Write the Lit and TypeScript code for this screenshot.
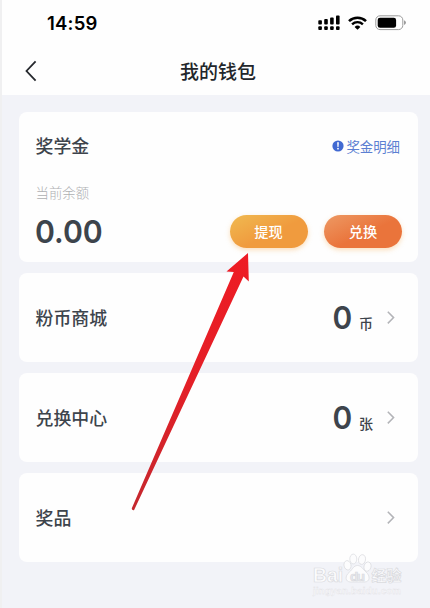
import { LitElement, html, css, svg, nothing } from "lit";
import { customElement, property } from "lit/decorators.js";

const chevron = html`<svg width="10" height="14" viewBox="0 0 10 14" fill="none" stroke="#b3b4b8" stroke-width="1.5">
  <path d="M1.8 0.8 7.6 6.6 1.8 12.4" />
</svg>`;

@customElement("status-bar")
export class StatusBar extends LitElement {
  static styles = css`
    :host {
      display: flex;
      align-items: center;
      box-sizing: border-box;
      height: 46px;
      padding: 0 24px 0 45px;
      color: #000;
    }
    .time {
      flex: 1;
      font: 600 18.5px/22px Inter, sans-serif;
      letter-spacing: 0.2px;
    }
    svg { display: block; }
    .wifi { margin: 0 8px; }
  `;
  render() {
    return html`
      <span class="time">14:59</span>
      <svg width="22" height="16" viewBox="0 0 22 16">
        ${[0, 1, 2, 3].map((i) => svg`
          <rect x=${0.3 + i * 5.9} y=${[5.2, 4, 2.5, 0.5][i]} width="3.6" height=${[4.2, 5.4, 6.9, 8.9][i]} rx="0.9" />
          <rect x=${0.3 + i * 5.9} y="11.3" width="3.6" height="3.6" rx="0.9" />
        `)}
      </svg>
      <svg class="wifi" width="19" height="14" viewBox="0 0 19 14" fill="none" stroke="#000">
        <path d="M1 5.1A12.3 12.3 0 0 1 18 5.1" stroke-width="2.6" />
        <path d="M4.1 8.3A7.9 7.9 0 0 1 14.9 8.3" stroke-width="2.4" />
        <path d="M6.6 10.9a4.3 4.3 0 0 1 5.8 0L9.5 13.8Z" fill="#000" stroke="none" />
      </svg>
      <svg width="31" height="16" viewBox="0 0 31 16">
        <rect x="0.8" y="0.8" width="27" height="13.8" rx="4.2" fill="none" stroke="#9b9b9b" />
        <rect x="2.7" y="2.7" width="18.4" height="10" rx="2.3" />
        <path d="M29 5.3q2.1.9 2 2.4t-2 2.4Z" fill="#9b9b9b" />
      </svg>
    `;
  }
}

@customElement("wallet-row")
export class WalletRow extends LitElement {
  @property() label = "";
  @property() amount = "";
  @property() unit = "";

  static styles = css`
    :host {
      display: flex;
      align-items: center;
      box-sizing: border-box;
      height: 89px;
      padding: 0 22px 0 16.5px;
      border-radius: 8px;
      background: #fefefe;
      color: #3d444c;
    }
    .label { flex: 1; padding-bottom: 2px; font-size: 17.9px; line-height: 28px; font-weight: 500; }
    .value { display: flex; align-items: baseline; margin-right: 13px; }
    .amount { font: 600 31.5px/40px Inter, sans-serif; transform: scaleX(0.95); }
    .unit { margin-left: 6.5px; font-size: 14px; line-height: 20px; font-weight: 500; }
  `;
  render() {
    return html`
      <span class="label">${this.label}</span>
      ${this.amount
        ? html`<span class="value"><span class="amount">${this.amount}</span><span class="unit">${this.unit}</span></span>`
        : nothing}
      ${chevron}
    `;
  }
}

@customElement("app-root")
export class AppRoot extends LitElement {
  static styles = css`
    :host {
      display: block;
      position: relative;
      box-sizing: border-box;
      width: 430px;
      height: 608px;
      overflow: hidden;
      border-left: 2px solid #f0f0f1;
      background: #f2f3f8;
      color: #3d444c;
      font-family: "Noto Sans CJK SC", sans-serif;
    }
    .top { height: 95px; background: #fefefe; }
    .nav {
      display: grid;
      grid-template-columns: 36px 1fr 36px;
      align-items: center;
      height: 49px;
      padding-left: 4px;
    }
    .back { justify-self: end; margin-right: 5px; }
    .title {
      text-align: center;
      color: #22262b;
      font-size: 19px;
      line-height: 28px;
      font-weight: 500;
    }
    .cards {
      display: flex;
      flex-direction: column;
      gap: 11px;
      padding: 17px 10px 0 17px;
    }
    .balance {
      box-sizing: border-box;
      width: 399px;
      height: 150px;
      padding: 19px 16px 0 16.5px;
      border-radius: 8px;
      background: #fefefe;
    }
    wallet-row { width: 399px; }
    .line { display: flex; align-items: center; justify-content: space-between; }
    .name { font-size: 17.9px; line-height: 28px; font-weight: 500; }
    .detail {
      display: flex;
      align-items: center;
      gap: 2px;
      margin-right: 2px;
      padding-top: 1px;
      color: #5c7fd2;
      font-size: 13.4px;
      line-height: 20px;
    }
    .caption { margin-top: 24px; color: #aeafb2; font-size: 13.4px; line-height: 19px; font-weight: 300; }
    .money { height: 58px; }
    .sum {
      padding-top: 2px;
      margin-left: -0.5px;
      font: 600 31.5px/40px Inter, sans-serif;
      transform: scaleX(0.96);
      transform-origin: left;
    }
    .actions { display: flex; gap: 16.5px; }
    .btn {
      width: 78px;
      height: 33px;
      border-radius: 17px;
      color: #fff;
      text-align: center;
      font-size: 14.2px;
      line-height: 32px;
      font-weight: 500;
      box-shadow: 0 2px 5px rgba(244, 162, 65, 0.35);
    }
    .withdraw { background: linear-gradient(155deg, #f0b74f 5%, #f09b3e 55%); }
    .redeem { background: linear-gradient(155deg, #ed9660 5%, #ea743b 55%); }
    .arrow { position: absolute; left: 128px; top: 250px; }
    .mark {
      position: absolute;
      left: 307px;
      top: 552px;
    }
    .mark text { font-family: "Liberation Sans", "Noto Sans CJK SC", sans-serif; font-weight: 700; }
  `;
  render() {
    return html`
      <div class="top">
        <status-bar></status-bar>
        <div class="nav">
          <svg class="back" width="13" height="22" viewBox="0 0 13 22" fill="none" stroke="#25282d" stroke-width="1.8">
            <path d="M11.6 1.4 2.5 11l9.1 9.6" />
          </svg>
          <span class="title">我的钱包</span>
        </div>
      </div>
      <div class="cards">
        <section class="balance">
          <div class="line">
            <span class="name">奖学金</span>
            <span class="detail">
              <svg width="12" height="12" viewBox="0 0 12 12">
                <circle cx="6" cy="6" r="5.6" fill="#4169d2" />
                <path d="M5.1 2.3h1.8L6.5 7h-1Z" fill="#fff" />
                <circle cx="6" cy="8.7" r="0.9" fill="#fff" />
              </svg>
              奖金明细
            </span>
          </div>
          <div class="caption">当前余额</div>
          <div class="line money">
            <span class="sum">0.00</span>
            <div class="actions">
              <div class="btn withdraw">提现</div>
              <div class="btn redeem">兑换</div>
            </div>
          </div>
        </section>
        <wallet-row label="粉币商城" amount="0" unit="币"></wallet-row>
        <wallet-row label="兑换中心" amount="0" unit="张"></wallet-row>
        <wallet-row label="奖品"></wallet-row>
      </div>
      <svg class="arrow" width="124" height="264" viewBox="0 0 124 264">
        <defs>
          <linearGradient id="red" x1="0" y1="1" x2="0" y2="0">
            <stop offset="0" stop-color="#c4282e" />
            <stop offset="0.5" stop-color="#e41f27" />
            <stop offset="1" stop-color="#ee1c24" />
          </linearGradient>
        </defs>
        <path fill="url(#red)" d="M118 3 96.5 21.5l7.3.4L1.8 258.2q-.2 2.4 2.2 2.1L113.5 26.5l5.3 5Z" />
      </svg>
      <svg class="mark" width="96" height="46" viewBox="0 0 96 46">
        <g fill="#fcfcfd" stroke="#d9dade" stroke-width="0.7">
          <ellipse cx="38.5" cy="13.3" rx="3.5" ry="4.7" transform="rotate(-12 38.5 13.3)" />
          <ellipse cx="44.3" cy="7" rx="3.5" ry="4.9" />
          <ellipse cx="53" cy="7.5" rx="3.5" ry="4.9" transform="rotate(10 53 7.5)" />
          <ellipse cx="58.5" cy="14.6" rx="3.5" ry="4.7" transform="rotate(15 58.5 14.6)" />
          <path d="M48.5 13.5c-4 0-5 4-8 6.5-5 4-4.3 10 1 10h14c5.5 0 6-6 1.5-10-3-2.5-4.5-6.5-8.5-6.5Z" />
          <text x="4" y="30" font-size="21" textLength="30" lengthAdjust="spacingAndGlyphs">Bai</text>
          <text x="41" y="28.5" font-size="13.5" textLength="15" fill="#e9ebf0">du</text>
          <text x="62.5" y="28.5" font-size="15" textLength="30">经验</text>
        </g>
        <text x="4" y="42" font-size="9.5" textLength="88" fill="#fafafc" stroke="#dfe0e4" stroke-width="0.35">jingyan.baidu.com</text>
      </svg>
    `;
  }
}
